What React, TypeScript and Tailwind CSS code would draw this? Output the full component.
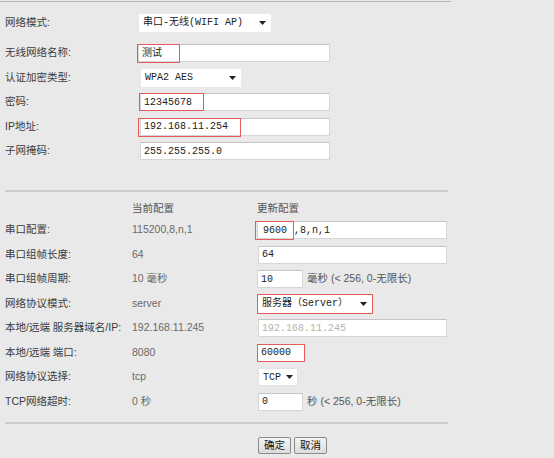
import type { ReactNode } from "react";

const cjk = { fontFamily: '"Liberation Sans", "Noto Sans CJK SC", sans-serif' };
const mono = { fontFamily: '"Liberation Mono", "Noto Sans CJK SC", monospace' };

function Caret() {
  return (
    <svg width="7" height="4" viewBox="0 0 7 4" className="shrink-0">
      <path d="M0 0h7L3.5 4z" fill="#222" />
    </svg>
  );
}

function Select({ value, className = "" }: { value: string; className?: string }) {
  return (
    <div
      className={`flex h-[18px] items-center justify-between bg-white pl-[4px] pr-[5px] text-[10px] text-[#222] ${className}`}
      style={mono}
    >
      <span className="whitespace-pre">{value}</span>
      <Caret />
    </div>
  );
}

function Input({
  value,
  className = "",
  muted = false,
  mark,
}: {
  value: ReactNode;
  className?: string;
  muted?: boolean;
  mark?: string;
}) {
  return (
    <div
      className={`relative flex h-[18px] items-center border border-[#d6d6d6] border-t-[#c4c4c4] bg-white pl-[3px] text-[10px] ${
        muted ? "text-[#b4b4b4]" : "text-[#222]"
      } ${className}`}
      style={mono}
    >
      <span className="flex items-center whitespace-pre">{value}</span>
      {mark && <div className={`pointer-events-none absolute border-[1.5px] border-[#e35b5b] ${mark}`} />}
    </div>
  );
}

function TopRow({ label, children, className = "" }: { label: string; children: ReactNode; className?: string }) {
  return (
    <div className={`flex h-[24.5px] items-center ${className}`}>
      <div className="w-[135px] shrink-0 pl-[5px] text-[#3c3c3c]">{label}</div>
      {children}
    </div>
  );
}

function ConfRow({ label, current, children }: { label: string; current: string; children: ReactNode }) {
  return (
    <div className="grid h-[24.5px] grid-cols-[127px_125px_1fr] items-center pl-[5px]">
      <div className="whitespace-nowrap text-[#3c3c3c]">{label}</div>
      <div className="text-[#6a6a6a]">{current}</div>
      <div className="flex items-center">{children}</div>
    </div>
  );
}

const hint = "text-[#555] ml-[4px] whitespace-nowrap";

export default function App() {
  return (
    <div className="h-[458px] w-[554px] overflow-hidden bg-[#e9e9e9] text-[10.5px]" style={cjk}>
      <div className="mt-px h-px w-[451px] bg-[#b6b6b6]" />

      <TopRow label="网络模式:" className="mt-[8px] !h-[25px]">
        <Select value="串口-无线(WIFI AP)" className="ml-[4px] w-[132px]" />
      </TopRow>
      <TopRow label="无线网络名称:" className="mt-[6px]">
        <Input
          value="测试"
          className="ml-[3px] w-[192px] border-[#b9d1e6]"
          mark="-left-[2px] -top-px h-[19px] w-[43px]"
        />
      </TopRow>
      <TopRow label="认证加密类型:">
        <Select value="WPA2 AES" className="ml-[6px] w-[100px]" />
      </TopRow>
      <TopRow label="密码:">
        <Input value="12345678" className="ml-[5px] w-[190px]" mark="-left-[2px] -top-px h-[18px] w-[65px]" />
      </TopRow>
      <TopRow label="IP地址:">
        <Input value="192.168.11.254" className="ml-[5px] w-[190px]" mark="-left-[3px] -top-px h-[19px] w-[103px]" />
      </TopRow>
      <TopRow label="子网掩码:">
        <Input value="255.255.255.0" className="ml-[5px] w-[190px]" />
      </TopRow>

      <div className="ml-[5px] mt-[26.5px] h-[2px] w-[443px] bg-[#cdcdcd]" />

      <div className="mt-[7px] grid h-[19px] grid-cols-[127px_125px_1fr] items-center pl-[5px] text-[#555]">
        <div />
        <div>当前配置</div>
        <div>更新配置</div>
      </div>

      <ConfRow label="串口配置:" current="115200,8,n,1">
        <Input
          className="w-[190px] !pl-0"
          value={
            <>
              <span className="-ml-[3px] flex h-[19px] w-[39px] items-center border-[1.5px] border-[#e35b5b] pl-[7px]">
                9600
              </span>
              <span>,8,n,1</span>
            </>
          }
        />
      </ConfRow>
      <ConfRow label="串口组帧长度:" current="64">
        <Input value="64" className="ml-px w-[189px]" />
      </ConfRow>
      <ConfRow label="串口组帧周期:" current="10 毫秒">
        <Input value="10" className="w-[46px]" />
        <span className={hint}>毫秒 (&lt; 256, 0-无限长)</span>
      </ConfRow>
      <ConfRow label="网络协议模式:" current="server">
        <Select value="服务器（Server）" className="!h-[20px] w-[116px] border-[1.5px] border-[#e35b5b]" />
      </ConfRow>
      <ConfRow label="本地/远端 服务器域名/IP:" current="192.168.11.245">
        <Input value="192.168.11.245" muted className="ml-px w-[189px]" />
      </ConfRow>
      <ConfRow label="本地/远端 端口:" current="8080">
        <Input value="60000" className="w-[48px] border-[1.5px] !border-[#e35b5b]" />
      </ConfRow>
      <ConfRow label="网络协议选择:" current="tcp">
        <Select value="TCP" className="ml-px w-[40px] border border-[#e2e2e2] !pr-[4px]" />
      </ConfRow>
      <ConfRow label="TCP网络超时:" current="0 秒">
        <Input value="0" className="ml-px w-[45px]" />
        <span className={hint}>秒 (&lt; 256, 0-无限长)</span>
      </ConfRow>

      <div className="ml-[5px] mt-[8px] h-[2px] w-[443px] bg-[#cdcdcd]" />

      <div className="ml-[258px] mt-[13px] flex gap-[3px]">
        {["确定", "取消"].map((t) => (
          <button
            key={t}
            className="flex h-[17px] w-[33px] items-center justify-center rounded-[2px] border border-[#8a8a8a] bg-gradient-to-b from-[#f4f4f4] to-[#dcdcdc] text-[10.5px] text-[#111]"
          >
            {t}
          </button>
        ))}
      </div>
    </div>
  );
}
